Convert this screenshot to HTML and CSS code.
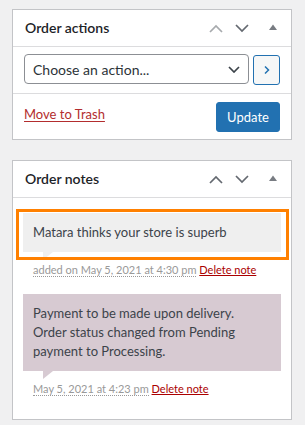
FILE: index.html
```html
<!DOCTYPE html>
<html lang="en">
<head>
<meta charset="utf-8">
<title>Order</title>
<link rel="stylesheet" href="styles.css">
</head>
<body>
<div class="page">
  <section class="postbox">
    <div class="postbox-header">
      <h2>Order actions</h2>
      <div class="handle-actions">
        <button class="handle-btn narrow is-disabled" aria-label="Move up"><svg width="14" height="9" viewBox="0 0 14 9"><polyline points="1,8 7,2 13,8" fill="none" stroke="currentColor" stroke-width="1.7"/></svg></button>
        <button class="handle-btn narrow" aria-label="Move down"><svg width="14" height="9" viewBox="0 0 14 9"><polyline points="1,1 7,7 13,1" fill="none" stroke="currentColor" stroke-width="1.7"/></svg></button>
        <button class="handle-btn toggle" aria-label="Toggle panel"><svg width="8" height="6" viewBox="0 0 8 6"><polygon points="0,6 4,0.5 8,6" fill="currentColor"/></svg></button>
      </div>
    </div>
    <ul class="order-actions">
      <li class="action-row">
        <div class="select">
          <span>Choose an action...</span>
          <svg class="select-caret" width="12" height="7" viewBox="0 0 12 7"><polyline points="1,1 6,6 11,1" fill="none" stroke="currentColor" stroke-width="1.7"/></svg>
        </div>
        <button class="go-btn" aria-label="Apply"><svg width="6" height="8" viewBox="0 0 6 8"><polyline points="1,0.5 4.5,4 1,7.5" fill="none" stroke="currentColor" stroke-width="1.5"/></svg></button>
      </li>
      <li class="submit-row">
        <a class="trash" href="#">Move to Trash</a>
        <button class="update">Update</button>
      </li>
    </ul>
  </section>

  <section class="postbox">
    <div class="postbox-header">
      <h2>Order notes</h2>
      <div class="handle-actions">
        <button class="handle-btn narrow" aria-label="Move up"><svg width="14" height="9" viewBox="0 0 14 9"><polyline points="1,8 7,2 13,8" fill="none" stroke="currentColor" stroke-width="1.7"/></svg></button>
        <button class="handle-btn narrow" aria-label="Move down"><svg width="14" height="9" viewBox="0 0 14 9"><polyline points="1,1 7,7 13,1" fill="none" stroke="currentColor" stroke-width="1.7"/></svg></button>
        <button class="handle-btn toggle" aria-label="Toggle panel"><svg width="8" height="6" viewBox="0 0 8 6"><polygon points="0,6 4,0.5 8,6" fill="currentColor"/></svg></button>
      </div>
    </div>
    <ul class="order-notes">
      <li class="note customer-note">
        <div class="note-content"><p>Matara thinks your store is superb</p></div>
        <p class="meta"><abbr class="exact-date">added on May 5, 2021 at 4:30 pm</abbr> <a class="delete-note" href="#">Delete note</a></p>
        <div class="highlight"></div>
      </li>
      <li class="note system-note">
        <div class="note-content"><p>Payment to be made upon delivery.<br>Order status changed from Pending payment to Processing.</p></div>
        <p class="meta"><abbr class="exact-date">May 5, 2021 at 4:23 pm</abbr> <a class="delete-note" href="#">Delete note</a></p>
      </li>
    </ul>
  </section>
</div>
</body>
</html>
```
FILE: styles.css
```css
* { box-sizing: border-box; }
html, body { margin: 0; padding: 0; background: #f0f0f1; }
body {
  font-family: Lato, "Liberation Sans", sans-serif;
  color: #3c434a;
  font-size: 13px;
}
.page {
  padding: 9px 0 0 12px;
  width: 292px;
}
.postbox {
  background: #fff;
  border: 1px solid #c3c4c7;
  margin-bottom: 20px;
}
.postbox-header {
  display: flex;
  align-items: center;
  height: 37px;
  border-bottom: 1px solid #dcdcde;
}
.postbox-header h2 {
  flex: 1;
  margin: 0;
  padding: 0 12px;
  font-size: 14px;
  font-weight: 600;
  color: #1d2327;
  line-height: 20px;
}
.handle-actions { display: flex; height: 36px; }
.handle-btn {
  display: flex;
  align-items: center;
  justify-content: center;
  height: 36px;
  padding: 0;
  border: 0;
  background: none;
  color: #646970;
}
.handle-btn.narrow { width: 26px; }
.handle-btn.narrow svg { margin-top: 1px; }
.handle-btn.is-disabled { color: #a7aaad; }
.handle-btn.toggle { width: 36px; color: #787c82; }
.handle-btn.toggle svg { margin-top: -2px; }

.order-actions, .order-notes { list-style: none; margin: 0; padding: 0; }
.action-row {
  display: flex;
  align-items: flex-start;
  gap: 4px;
  padding: 7px 11px 8px;
  border-bottom: 1px solid #dcdcde;
}
.select {
  display: flex;
  align-items: center;
  justify-content: space-between;
  width: 225px;
  height: 30px;
  padding: 0 8px 0 8px;
  border: 1px solid #8c8f94;
  border-radius: 4px;
  font-size: 14px;
  color: #2c3338;
}
.select-caret { color: #3c434a; margin-top: 1px; }
.go-btn {
  display: flex;
  align-items: center;
  justify-content: center;
  width: 27px;
  height: 30px;
  margin-top: 1px;
  padding: 0;
  border: 1px solid #2271b1;
  border-radius: 3px;
  background: #f6f7f7;
  color: #2271b1;
}
.submit-row {
  display: flex;
  justify-content: space-between;
  align-items: flex-start;
  padding: 8px 11px 7px;
}
.trash {
  color: #b32d2e;
  font-size: 13px;
  line-height: 24px;
  text-decoration: underline;
  text-underline-offset: 2px;
}
.update {
  height: 30px;
  width: 64px;
  padding: 0 10px;
  border: 1px solid #2271b1;
  border-radius: 3px;
  background: #2271b1;
  color: #fff;
  font-family: inherit;
  font-size: 13px;
}

.order-notes { padding: 15px 0 7px; }
.note {
  position: relative;
  padding: 0 10px;
  margin-bottom: 5px;
}
.note-content {
  position: relative;
  padding: 10px;
  background: #efefef;
  line-height: 19px;
  font-size: 13px;
  color: #3c434a;
}
.note-content p { margin: 0; }
.note-content::after {
  content: "";
  position: absolute;
  left: 20px;
  bottom: -8px;
  width: 0;
  height: 0;
  border-style: solid;
  border-width: 8px 10px 0 0;
  border-color: #efefef transparent transparent transparent;
}
.system-note .note-content { background: #d7cad2; }
.system-note .note-content::after { border-top-color: #d7cad2; }
.meta {
  margin: 0;
  padding: 10px;
  font-size: 11px;
  line-height: 16.5px;
  color: #999;
}
.exact-date {
  text-decoration: none;
  border-bottom: 1px dotted #999;
}
.delete-note {
  color: #a00;
  text-decoration: underline;
}
.highlight {
  position: absolute;
  left: 3px;
  top: -4px;
  width: 273px;
  height: 51px;
  border: 3px solid #ff8000;
  pointer-events: none;
}
```
